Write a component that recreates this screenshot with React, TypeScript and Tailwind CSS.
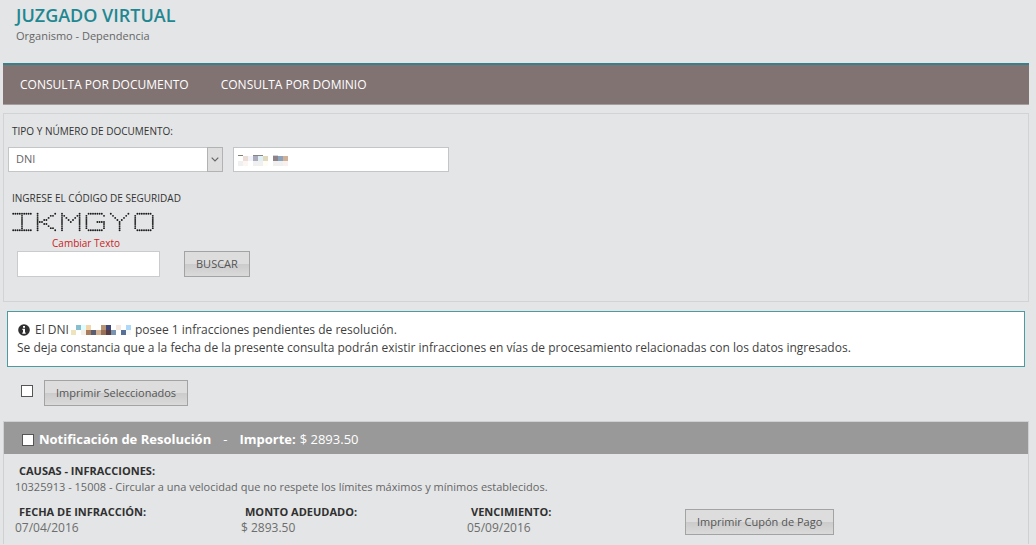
import { ReactNode } from 'react';

const CAPTCHA_GLYPHS: string[][] = [
  ['#########', '....#....', '....#....', '....#....', '....#....', '....#....', '....#....', '....#....', '#########'],
  ['#.......#', '#.....##.', '#....#...', '#..##....', '###......', '#..##....', '#....#...', '#.....##.', '#.......#'],
  ['#.......#', '##.....##', '#.#...#.#', '#..#.#..#', '#...#...#', '#.......#', '#.......#', '#.......#', '#.......#'],
  ['.#######.', '#.......#', '#........', '#........', '#....####', '#.......#', '#.......#', '#.......#', '.#######.'],
  ['#.......#', '.#.....#.', '..#...#..', '...#.#...', '....#....', '....#....', '....#....', '....#....', '....#....'],
  ['.#######.', '#.......#', '#.......#', '#.......#', '#.......#', '#.......#', '#.......#', '#.......#', '.#######.'],
];

function Captcha() {
  return (
    <svg role="img" aria-label="Código de seguridad" width="142" height="20" viewBox="0 0 142 20" className="block">
      {CAPTCHA_GLYPHS.flatMap((rows, g) =>
        rows.flatMap((row, y) =>
          row.split('').map((dot, x) =>
            dot === '#' ? (
              <circle key={`${g}-${y}-${x}`} cx={1.2 + g * 24.4 + x * 2.2} cy={1.8 + y * 2.05} r={0.95} fill="#1a1a1a" />
            ) : null,
          ),
        ),
      )}
    </svg>
  );
}

type Block = [x: number, y: number, w: number, h: number, color: string];

const INPUT_BLOCKS: Block[] = [
  [0, 0, 5, 1, '#807e6c'], [5, 1, 5, 5, '#eaded6'], [10, 1, 5, 5, '#f3f4fb'],
  [15, 0, 10, 1, '#868681'], [15, 1, 5, 5, '#abacbe'], [20, 1, 5, 5, '#dff0f6'], [25, 1, 5, 5, '#e0d9bd'],
  [35, 0, 5, 1, '#d1d3e0'], [35, 1, 5, 5, '#8f8289'], [40, 1, 5, 5, '#8ca3bd'], [45, 1, 5, 5, '#cfb197'],
  [0, 6, 5, 5, '#f1f0f1'], [5, 6, 5, 5, '#fdf5f1'], [15, 6, 10, 5, '#f0f0f1'], [25, 6, 5, 5, '#fdfcf5'],
  [35, 6, 10, 5, '#f0f0f1'], [45, 6, 5, 5, '#f7f1ef'],
];

const NOTICE_BLOCKS: Block[] = [
  [0, 5, 5, 5, '#eee3bd'], [5, 0, 5, 5, '#87bfd1'], [10, 0, 5, 5, '#dffcff'], [10, 5, 5, 5, '#f5f0e5'],
  [15, 0, 5, 5, '#f4d5aa'], [15, 5, 5, 5, '#a97c5b'], [20, 5, 5, 5, '#5a5c70'], [25, 5, 5, 5, '#d3b091'],
  [30, 0, 5, 5, '#b79572'], [30, 5, 5, 5, '#9a7059'], [35, 0, 5, 5, '#424777'], [35, 5, 5, 5, '#553d43'],
  [40, 5, 5, 5, '#7894b1'], [45, 0, 5, 5, '#f4e8df'], [50, 5, 5, 5, '#57709a'], [55, 0, 5, 5, '#acd8fa'],
  [55, 5, 5, 5, '#f7faf8'],
];

function Pixels({ blocks, className }: { blocks: Block[]; className: string }) {
  return (
    <svg aria-hidden="true" viewBox="0 0 60 11" width="60" height="11" shapeRendering="crispEdges" className={className}>
      {blocks.map(([x, y, w, h, c]) => (
        <rect key={`${x}-${y}`} x={x} y={y} width={w} height={h} fill={c} />
      ))}
    </svg>
  );
}

function Button({ children }: { children: ReactNode }) {
  return (
    <button
      type="button"
      className="h-[26px] border border-[#a3a3a3] bg-linear-to-b from-[#dddddd] from-50% via-[#cbcbcb] via-50% to-[#dadada] px-[11px] text-[11px] font-medium whitespace-nowrap text-[#555]"
    >
      {children}
    </button>
  );
}

function Checkbox({ label }: { label: string }) {
  return (
    <input
      type="checkbox"
      aria-label={label}
      className="block size-3 shrink-0 appearance-none border border-[#555] bg-white checked:bg-[#1f8791]"
    />
  );
}

function Field({ label, value }: { label: string; value: string }) {
  return (
    <div className="w-[226px]">
      <dt className="pl-1 text-[11px] leading-4 font-bold text-[#303030]">{label}</dt>
      <dd className="text-xs leading-4 text-[#6d6d6d]">{value}</dd>
    </div>
  );
}

export default function App() {
  return (
    <div className="min-h-screen bg-[#e3e5e6] pr-[7px] pl-[3px] font-['Open_Sans','Noto_Sans',sans-serif] text-[#444]">
      <header className="h-[63px] pt-[3px] pl-[13px]">
        <h1 className="text-lg leading-6 font-semibold text-[#1f8791]">JUZGADO VIRTUAL</h1>
        <p className="pt-px text-[11px] leading-4 text-[#666]">Organismo - Dependencia</p>
      </header>

      <nav className="flex h-[42px] items-center gap-8 border-t-2 border-b border-t-[#37828a] border-b-[#a79d9d] bg-[#827373] px-[17px] text-xs font-medium text-white">
        <a href="#documento">CONSULTA POR DOCUMENTO</a>
        <a href="#dominio">CONSULTA POR DOMINIO</a>
      </nav>

      <main>
        <form className="mt-2 h-[189px] border border-[#d2d3d4] pt-[9px] pl-1" onSubmit={(e) => e.preventDefault()}>
          <label htmlFor="tipo" className="block pl-1 text-[10px] leading-4 font-medium text-[#333]">
            TIPO Y NÚMERO DE DOCUMENTO:
          </label>
          <div className="mt-2 flex gap-[10px]">
            <div className="relative">
              <select
                id="tipo"
                className="block h-[25px] w-[215px] appearance-none border border-[#c3c5c7] bg-white pl-[7px] text-[11px] text-[#666]"
              >
                <option>DNI</option>
              </select>
              <span className="pointer-events-none absolute top-0 right-0 flex h-[25px] w-4 items-center justify-center border border-[#b2b2b2] bg-[#dedede]">
                <svg viewBox="0 0 8 5" width="8" height="5" fill="none" stroke="#666" strokeWidth="1.2">
                  <path d="M0.7 0.7 4 4 7.3 0.7" />
                </svg>
              </span>
            </div>
            <div className="relative">
              <input
                type="text"
                aria-label="Número de documento"
                className="block h-[25px] w-[216px] border border-[#c3c5c7] bg-white px-1 text-[11px]"
              />
              <Pixels blocks={INPUT_BLOCKS} className="pointer-events-none absolute top-2 left-[5px]" />
            </div>
          </div>

          <label htmlFor="codigo" className="mt-[18px] mb-[6px] block pl-1 text-[10px] leading-4 font-medium text-[#333]">
            INGRESE EL CÓDIGO DE SEGURIDAD
          </label>
          <div className="flex items-end gap-6 pl-1">
            <div className="w-[148px]">
              <Captcha />
              <a href="#cambiar" className="mt-[3px] block text-center text-[10px] leading-4 text-[#cc1c24]">
                Cambiar Texto
              </a>
              <input id="codigo" type="text" className="ml-[5px] block h-[26px] w-[143px] border border-[#c9cbcd] bg-white px-1 text-[11px]" />
            </div>
            <Button>BUSCAR</Button>
          </div>
        </form>

        <section className="mt-[9px] mr-1 ml-1 border border-[#4b9ba3] bg-white py-[9px] pl-[9px] text-xs text-[#3f3f3f]">
          <p className="flex h-[18px] items-center leading-[18px]">
            <svg viewBox="0 0 12 12" width="12" height="12" className="mr-[5px] ml-px" aria-hidden="true">
              <circle cx="6" cy="6" r="5.8" fill="#303030" />
              <path d="M5 2h2v1.7H5zM4.4 4.7H7v3.8h.7v1.2H4.3V8.5H5V5.9h-.6z" fill="#fff" />
            </svg>
            El DNI
            <Pixels blocks={NOTICE_BLOCKS} className="mr-1 ml-[2px]" />
            posee 1 infracciones pendientes de resolución.
          </p>
          <p className="leading-[18px]">
            Se deja constancia que a la fecha de la presente consulta podrán existir infracciones en vías de procesamiento relacionadas con los datos ingresados.
          </p>
        </section>

        <div className="mt-[13px] flex gap-[11px] pl-[18px]">
          <div className="pt-[5px]">
            <Checkbox label="Seleccionar todos" />
          </div>
          <Button>Imprimir Seleccionados</Button>
        </div>

        <article className="mt-[15px] border border-b-0 border-[#cfd0d1]">
          <h2 className="flex h-8 items-center bg-[#999] pt-1 pl-[18px] text-[13px] text-white">
            <Checkbox label="Seleccionar notificación" />
            <span className="ml-[5px] font-bold">Notificación de Resolución</span>
            <span className="mx-3">-</span>
            <span className="font-bold">Importe:</span>
            <span className="ml-1 font-medium">$ 2893.50</span>
          </h2>
          <div className="pt-[9px] pb-1 pl-[11px]">
            <dl>
              <dt className="pl-1 text-[11px] leading-4 font-bold text-[#303030]">CAUSAS - INFRACCIONES:</dt>
              <dd className="text-[11px] leading-4 text-[#666]">
                10325913 - 15008 - Circular a una velocidad que no respete los límites máximos y mínimos establecidos.
              </dd>
            </dl>
            <div className="mt-[9px] flex">
              <dl className="flex pb-1">
                <Field label="FECHA DE INFRACCIÓN:" value="07/04/2016" />
                <Field label="MONTO ADEUDADO:" value="$ 2893.50" />
                <Field label="VENCIMIENTO:" value="05/09/2016" />
              </dl>
              <div className="-ml-2 pt-1">
                <Button>Imprimir Cupón de Pago</Button>
              </div>
            </div>
          </div>
        </article>
      </main>
    </div>
  );
}
